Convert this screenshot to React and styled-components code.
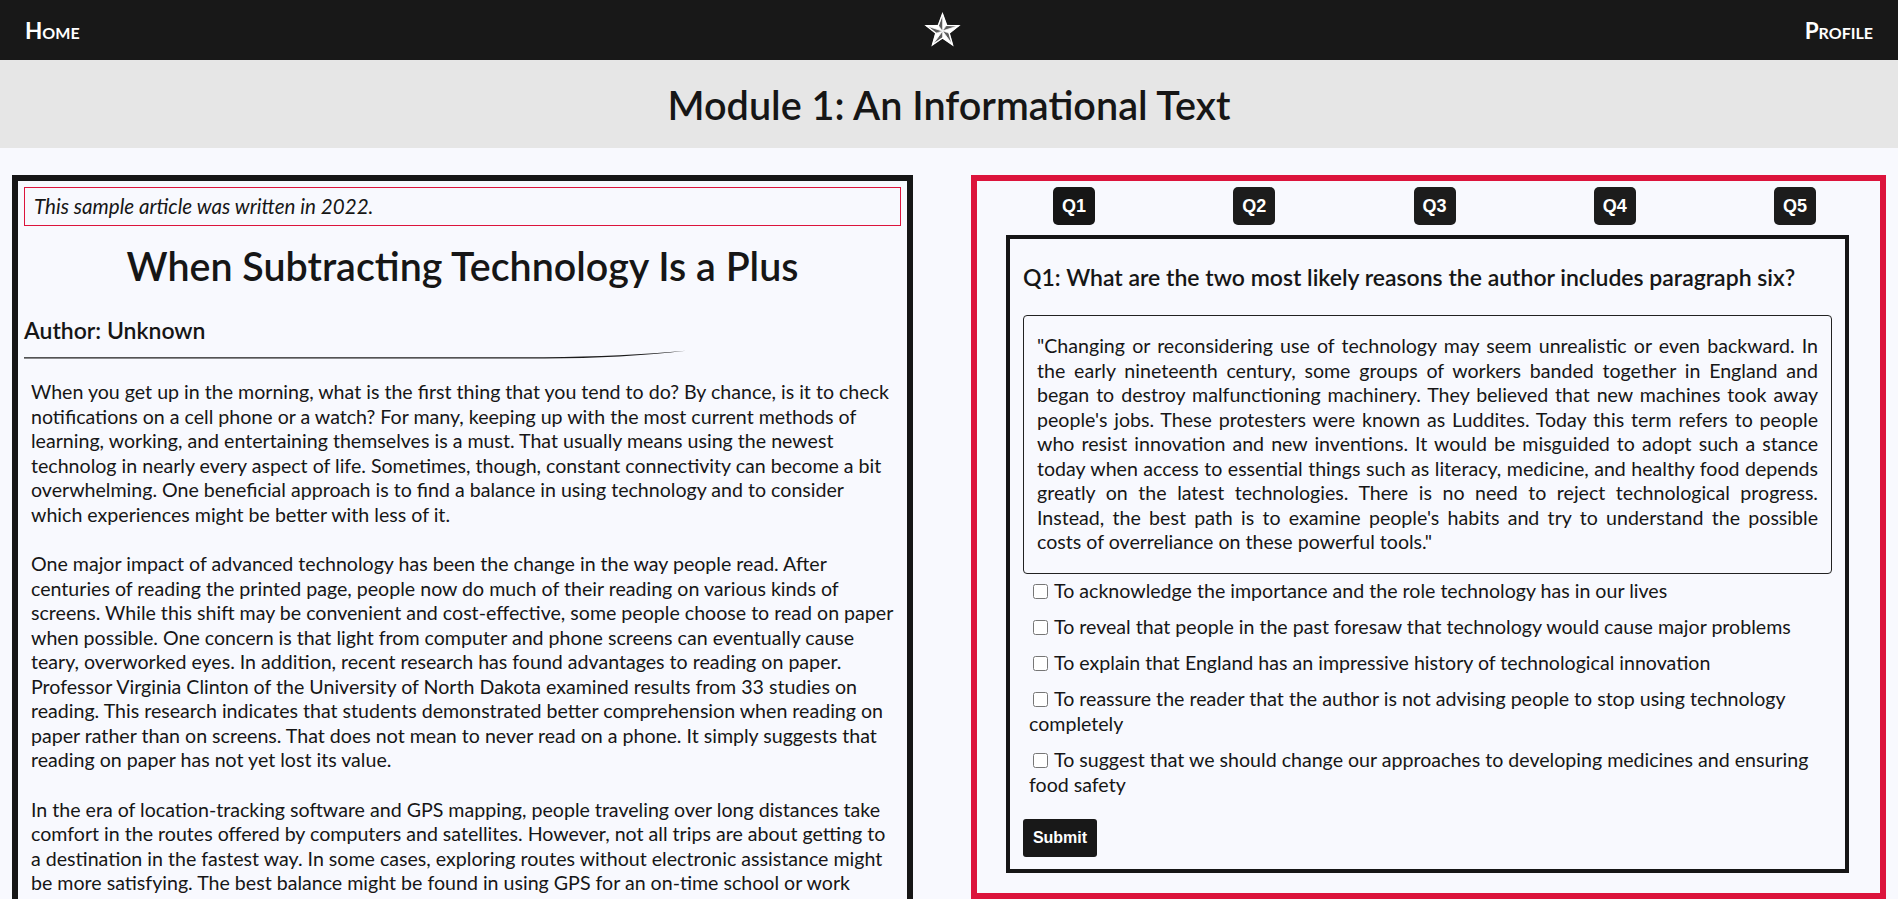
import React, { useState } from "react";
import styled, { createGlobalStyle } from "styled-components";

const GlobalStyle = createGlobalStyle`
  * { box-sizing: border-box; }
  body {
    margin: 0;
    background-color: #f8f9fe;
    font-family: Lato, "Open Sans", sans-serif;
    color: #161616;
  }
`;

const Nav = styled.nav`
  display: flex;
  align-items: center;
  justify-content: space-between;
  height: 60px;
  padding: 0 25px;
  background-color: #181818;
`;

const NavLink = styled.a`
  color: #ffffff;
  font-size: 22.5px;
  font-weight: 700;
  font-variant: small-caps;
  text-decoration: none;
  cursor: pointer;
`;

const Header = styled.header`
  display: flex;
  align-items: center;
  justify-content: center;
  height: 88px;
  background-color: #e6e6e6;
`;

const H1 = styled.h1`
  margin: 0;
  font-size: 39.6px;
  font-weight: 600;
`;

const Main = styled.main`
  display: grid;
  grid-template-columns: 901fr 915fr;
  column-gap: 58px;
  align-items: start;
  padding: 27px 12px 0;
`;

const Article = styled.section`
  border: 6px solid #161616;
  padding: 6px 6px 20px;
`;

const Note = styled.p`
  margin: 0;
  padding: 0 9px;
  line-height: 37px;
  border: 1px solid #dc143c;
  font-size: 20.6px;
  font-style: italic;
`;

const Title = styled.h2`
  margin: 16px 0 0;
  text-align: center;
  font-size: 39.4px;
  font-weight: 600;
  line-height: 48px;
`;

const Author = styled.h3`
  margin: 26px 0 0;
  font-size: 23px;
  font-weight: 600;
  line-height: 29px;
`;

const Swoosh = styled.svg`
  display: block;
  margin: 5px 0 0;
`;

const Paragraph = styled.p`
  margin: 21px 5px 0 7px;
  font-size: 19.6px;
  line-height: 24.5px;
  & + & { margin-top: 25px; }
`;

const QuizPanel = styled.section`
  border: 6px solid #dc143c;
  padding: 6px 0 20px;
`;

const QRow = styled.div`
  display: flex;
  justify-content: space-between;
  padding: 0 64px 0 76px;
`;

const QButton = styled.button`
  width: 42px;
  height: 38px;
  padding: 0;
  border: none;
  border-radius: 5px;
  background-color: ${(p) => (p.$active ? "#161616" : "#1c1c1c")};
  color: #ffffff;
  font-family: "Liberation Sans", Arial, sans-serif;
  font-size: 18px;
  font-weight: 700;
  cursor: pointer;
`;

const Card = styled.div`
  margin: 10px 31px 0 29px;
  padding: 0 13px 12px;
  border: 4px solid #161616;
`;

const Question = styled.h3`
  margin: 24px 0;
  font-size: 23px;
  font-weight: 600;
  line-height: 28px;
`;

const Passage = styled.p`
  margin: 0;
  padding: 18px 13px;
  border: 1px solid #222222;
  border-radius: 4px;
  font-size: 19.6px;
  line-height: 24.5px;
  text-align: justify;
`;

const Options = styled.div`
  margin-top: 5px;
`;

const Option = styled.label`
  display: block;
  margin: 0 0 11.8px 6px;
  font-size: 19.6px;
  line-height: 24.5px;
  cursor: pointer;
`;

const Check = styled.input`
  width: 15px;
  height: 15px;
  margin: 0 6px 0 4px;
  vertical-align: -1px;
`;

const Submit = styled.button`
  display: block;
  margin-top: 22px;
  width: 74px;
  height: 38px;
  border: none;
  border-radius: 3px;
  background-color: #181818;
  color: #ffffff;
  font-family: "Liberation Sans", Arial, sans-serif;
  font-size: 16px;
  font-weight: 700;
  cursor: pointer;
`;

const Star = () => {
  const pts = [];
  for (let i = 0; i < 10; i++) {
    const a = (-90 + i * 36) * (Math.PI / 180);
    const r = i % 2 === 0 ? 17 : 7;
    pts.push([18.5 + r * Math.cos(a), 19 + r * Math.sin(a)]);
  }
  const c = [18.5, 19];
  const facets = [];
  for (let i = 0; i < 10; i++) {
    const p1 = pts[i];
    const p2 = pts[(i + 1) % 10];
    facets.push(
      <polygon
        key={i}
        points={`${c[0]},${c[1]} ${p1[0]},${p1[1]} ${p2[0]},${p2[1]}`}
        fill={i % 2 === 0 ? "#ffffff" : "#5a5a5a"}
        stroke="#ffffff"
        strokeWidth="0.6"
      />
    );
  }
  return (
    <svg width="37" height="36" viewBox="0 0 37 36">
      {facets}
      <polygon
        points={pts.map((p) => p.join(",")).join(" ")}
        fill="none"
        stroke="#ffffff"
        strokeWidth="1.4"
        strokeLinejoin="miter"
      />
    </svg>
  );
};

const paragraphs = [
  "When you get up in the morning, what is the first thing that you tend to do? By chance, is it to check notifications on a cell phone or a watch? For many, keeping up with the most current methods of learning, working, and entertaining themselves is a must. That usually means using the newest technolog in nearly every aspect of life. Sometimes, though, constant connectivity can become a bit overwhelming. One beneficial approach is to find a balance in using technology and to consider which experiences might be better with less of it.",
  "One major impact of advanced technology has been the change in the way people read. After centuries of reading the printed page, people now do much of their reading on various kinds of screens. While this shift may be convenient and cost-effective, some people choose to read on paper when possible. One concern is that light from computer and phone screens can eventually cause teary, overworked eyes. In addition, recent research has found advantages to reading on paper. Professor Virginia Clinton of the University of North Dakota examined results from 33 studies on reading. This research indicates that students demonstrated better comprehension when reading on paper rather than on screens. That does not mean to never read on a phone. It simply suggests that reading on paper has not yet lost its value.",
  "In the era of location-tracking software and GPS mapping, people traveling over long distances take comfort in the routes offered by computers and satellites. However, not all trips are about getting to a destination in the fastest way. In some cases, exploring routes without electronic assistance might be more satisfying. The best balance might be found in using GPS for an on-time school or work commute while being open to turning off the satellite guidance on a more leisurely journey.",
  "Technology has also changed the way people shop and cook. Ordering groceries online saves time, yet choosing fresh produce at a local market can be a rewarding experience. Likewise, following a recipe from a worn family cookbook may feel more meaningful than watching a video tutorial.",
  "Finally, many people have found that spending time outdoors without devices helps them relax. A walk in the park, a game of catch, or a quiet afternoon of reading can offer a welcome break from constant alerts and updates.",
  "Changing or reconsidering use of technology may seem unrealistic or even backward. In the early nineteenth century, some groups of workers banded together in England and began to destroy malfunctioning machinery. They believed that new machines took away people's jobs. These protesters were known as Luddites. Today this term refers to people who resist innovation and new inventions. It would be misguided to adopt such a stance today when access to essential things such as literacy, medicine, and healthy food depends greatly on the latest technologies. There is no need to reject technological progress. Instead, the best path is to examine people's habits and try to understand the possible costs of overreliance on these powerful tools.",
];

const options = [
  "To acknowledge the importance and the role technology has in our lives",
  "To reveal that people in the past foresaw that technology would cause major problems",
  "To explain that England has an impressive history of technological innovation",
  "To reassure the reader that the author is not advising people to stop using technology completely",
  "To suggest that we should change our approaches to developing medicines and ensuring food safety",
];

const App = () => {
  const [current, setCurrent] = useState(1);
  const [checked, setChecked] = useState([]);

  const toggle = (i) =>
    setChecked((c) => (c.includes(i) ? c.filter((x) => x !== i) : [...c, i]));

  return (
    <>
      <GlobalStyle />
      <Nav>
        <NavLink>Home</NavLink>
        <Star />
        <NavLink>Profile</NavLink>
      </Nav>
      <Header>
        <H1>Module 1: An Informational Text</H1>
      </Header>
      <Main>
        <Article>
          <Note>This sample article was written in 2022.</Note>
          <Title>When Subtracting Technology Is a Plus</Title>
          <Author>Author: Unknown</Author>
          <Swoosh width="662" height="9" viewBox="0 0 662 9">
            <path
              d="M0 7.2 L520 7.2 Q600 6.6 662 0.8 Q600 8.2 520 8.6 L0 8.6 Z"
              fill="#1c1c1c"
            />
          </Swoosh>
          {paragraphs.map((p, i) => (
            <Paragraph key={i}>{p}</Paragraph>
          ))}
        </Article>
        <QuizPanel>
          <QRow>
            {[1, 2, 3, 4, 5].map((n) => (
              <QButton key={n} $active={n === current} onClick={() => setCurrent(n)}>
                Q{n}
              </QButton>
            ))}
          </QRow>
          <Card>
            <Question>
              Q1: What are the two most likely reasons the author includes paragraph six?
            </Question>
            <Passage>"{paragraphs[5]}"</Passage>
            <Options>
              {options.map((o, i) => (
                <Option key={i}>
                  <Check
                    type="checkbox"
                    checked={checked.includes(i)}
                    onChange={() => toggle(i)}
                  />
                  {o}
                </Option>
              ))}
            </Options>
            <Submit>Submit</Submit>
          </Card>
        </QuizPanel>
      </Main>
    </>
  );
};

export default App;
